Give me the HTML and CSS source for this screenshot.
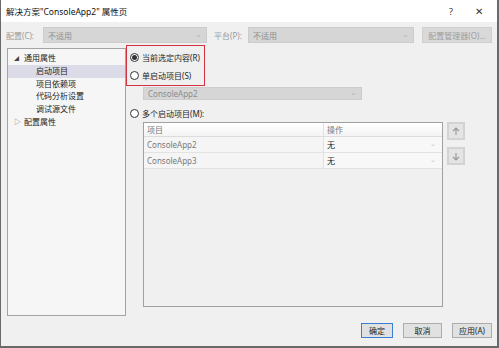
FILE: index.html
```html
<!DOCTYPE html>
<html>
<head>
    <title>解决方案"ConsoleApp2" 属性页</title>
    <link rel="stylesheet" href="styles.css">
</head>
<body>
    <div class="window">
        <div class="titlebar">
            <span class="title">解决方案"ConsoleApp2" 属性页</span>
            <span class="help">?</span>
            <span class="close">✕</span>
        </div>

        <div class="config-row">
            <span class="label label-config">配置(C):</span>
            <div class="combo combo-config"><span>不适用</span><span class="arrow">⌄</span></div>
            <span class="label label-platform">平台(P):</span>
            <div class="combo combo-platform"><span>不适用</span><span class="arrow">⌄</span></div>
            <div class="btn btn-disabled btn-manager">配置管理器(O)...</div>
        </div>

        <div class="main">
            <div class="tree">
                <div class="tree-item top"><span class="twisty">◢</span>通用属性</div>
                <div class="tree-item child selected">启动项目</div>
                <div class="tree-item child">项目依赖项</div>
                <div class="tree-item child">代码分析设置</div>
                <div class="tree-item child">调试源文件</div>
                <div class="tree-item top"><span class="twisty open">▷</span>配置属性</div>
            </div>

            <div class="content">
                <div class="mark-box">
                    <label class="radio"><span class="dot checked"></span>当前选定内容(R)</label>
                    <label class="radio"><span class="dot"></span>单启动项目(S)</label>
                </div>
                <div class="combo combo-project"><span>ConsoleApp2</span><span class="arrow">⌄</span></div>
                <label class="radio radio-multi"><span class="dot"></span>多个启动项目(M):</label>

                <div class="grid-area">
                    <div class="table">
                        <div class="row head">
                            <div class="cell name">项目</div>
                            <div class="cell action">操作</div>
                        </div>
                        <div class="row">
                            <div class="cell name">ConsoleApp2</div>
                            <div class="cell action"><span>无</span><span class="small-arrow">⌄</span></div>
                        </div>
                        <div class="row">
                            <div class="cell name">ConsoleApp3</div>
                            <div class="cell action"><span>无</span><span class="small-arrow">⌄</span></div>
                        </div>
                    </div>
                    <div class="move-buttons">
                        <div class="move"><svg width="8" height="9" viewBox="0 0 8 9"><path d="M4 1 L4 8 M1 4 L4 1 L7 4" stroke="#9a9a9a" stroke-width="1.2" fill="none"/></svg></div>
                        <div class="move"><svg width="8" height="9" viewBox="0 0 8 9"><path d="M4 1 L4 8 M1 5 L4 8 L7 5" stroke="#9a9a9a" stroke-width="1.2" fill="none"/></svg></div>
                    </div>
                </div>
            </div>
        </div>

        <div class="footer">
            <div class="btn btn-ok">确定</div>
            <div class="btn btn-cancel">取消</div>
            <div class="btn btn-apply">应用(A)</div>
        </div>
    </div>
</body>
</html>
```

FILE: styles.css
```css
body {
    margin: 0;
    font-family: "Noto Sans", "Noto Sans CJK SC", sans-serif;
    font-size: 8px;
    color: #1e1e1e;
    background: #f0f0f0;
}
.window {
    width: 499px;
    height: 348px;
    box-sizing: border-box;
    background: #f0f0f0;
    border-left: 1px solid #6a6a6a;
    border-right: 2px solid #6a6a6a;
    border-bottom: 2px solid #6a6a6a;
    position: relative;
}
.titlebar {
    height: 22px;
    background: #fff;
    display: flex;
    align-items: center;
    padding-left: 5px;
}
.title {
    flex: 1;
    font-size: 8.5px;
    color: #111;
}
.help {
    width: 12px;
    margin-right: 14px;
    font-size: 9px;
    color: #333;
}
.close {
    width: 14px;
    margin-right: 8px;
    font-size: 10px;
    color: #333;
}
.config-row {
    display: flex;
    align-items: center;
    height: 16px;
    margin-top: 5px;
    padding-left: 5px;
}
.label {
    color: #9a9a9a;
}
.label-config {
    width: 37px;
}
.label-platform {
    margin-left: 7px;
    width: 34px;
}
.combo {
    display: flex;
    align-items: center;
    justify-content: space-between;
    box-sizing: border-box;
    height: 16px;
    padding: 0 4px;
    background: #d6d6d6;
    border: 1px solid #cccccc;
    color: #8c8c8c;
}
.combo .arrow {
    color: #b4b4b4;
    font-size: 8px;
    margin-top: -4px;
}
.combo-config {
    width: 164px;
}
.combo-platform {
    width: 166px;
}
.btn {
    display: flex;
    align-items: center;
    justify-content: center;
    box-sizing: border-box;
    height: 16px;
    background: #e1e1e1;
    border: 1px solid #adadad;
    color: #1e1e1e;
}
.btn-disabled {
    background: #d9d9d9;
    border-color: #cfcfcf;
    color: #9d9d9d;
}
.btn-manager {
    width: 70px;
    margin-left: 8px;
}
.main {
    display: flex;
    margin-top: 2px;
}
.tree {
    width: 119px;
    height: 268px;
    box-sizing: border-box;
    margin-top: 3px;
    margin-left: 6px;
    padding-top: 3px;
    background: #f6f6f6;
    border: 1px solid #a3a3a3;
}
.tree-item {
    height: 12.8px;
    line-height: 12.8px;
    color: #222;
}
.tree-item.top {
    padding-left: 6px;
}
.tree-item.child {
    padding-left: 28px;
}
.tree-item.selected {
    background: #dcdce8;
}
.twisty {
    display: inline-block;
    width: 10px;
    font-size: 5px;
    color: #444;
    vertical-align: 1px;
}
.twisty.open {
    font-size: 7px;
    color: #777;
}
.content {
    display: flex;
    flex-direction: column;
    align-items: flex-start;
}
.mark-box {
    width: 79px;
    height: 41px;
    box-sizing: border-box;
    border: 1.5px solid #d2333f;
    padding-top: 5px;
    padding-left: 3px;
}
.radio {
    display: flex;
    align-items: center;
    height: 12px;
    margin-bottom: 6px;
    color: #1e1e1e;
}
.dot {
    width: 9px;
    height: 9px;
    box-sizing: border-box;
    border: 1px solid #333;
    border-radius: 50%;
    background: #fff;
    margin-right: 3px;
    display: flex;
    align-items: center;
    justify-content: center;
}
.dot.checked::after {
    content: "";
    width: 5px;
    height: 5px;
    border-radius: 50%;
    background: #333;
}
.combo-project {
    width: 219px;
    height: 13px;
    margin-left: 17px;
    margin-top: 1px;
}
.radio-multi {
    margin-top: 7px;
    margin-left: 4px;
    margin-bottom: 3px;
}
.grid-area {
    display: flex;
    margin-left: 17px;
}
.table {
    width: 300px;
    height: 185px;
    box-sizing: border-box;
    border: 1px solid #a0a0a0;
    background: #f0f0f0;
}
.row {
    display: flex;
    height: 15px;
    border-bottom: 1px solid #e3e3e3;
}
.row.head {
    height: 13px;
    background: linear-gradient(#ffffff, #f4f4f4);
    border-bottom: 1px solid #dcdcdc;
}
.cell {
    display: flex;
    align-items: center;
    box-sizing: border-box;
    padding-left: 3px;
}
.cell.name {
    width: 180px;
    color: #7a7a7a;
    background: #f5f5f5;
    border-right: 1px solid #e0e0e0;
}
.head .cell.name {
    background: transparent;
}
.cell.action {
    flex: 1;
    justify-content: space-between;
    padding-right: 6px;
    background: #f8f8f8;
}
.head .cell.action {
    background: transparent;
    color: #7a7a7a;
}
.small-arrow {
    color: #c4c4c4;
    font-size: 7px;
    margin-top: -3px;
}
.move-buttons {
    display: flex;
    flex-direction: column;
    gap: 7px;
    margin-left: 4px;
}
.move {
    width: 18px;
    height: 18px;
    box-sizing: border-box;
    border: 2px solid #d3d3d3;
    background: #e4e4e4;
    display: flex;
    align-items: center;
    justify-content: center;
}
.footer {
    display: flex;
    justify-content: flex-end;
    margin-top: 7px;
    padding-right: 5px;
    gap: 10px;
}
.footer .btn {
    height: 15px;
}
.btn-ok {
    width: 32px;
    border-color: #3c7fd0;
}
.btn-cancel {
    width: 39px;
}
.btn-apply {
    width: 40px;
}
```
